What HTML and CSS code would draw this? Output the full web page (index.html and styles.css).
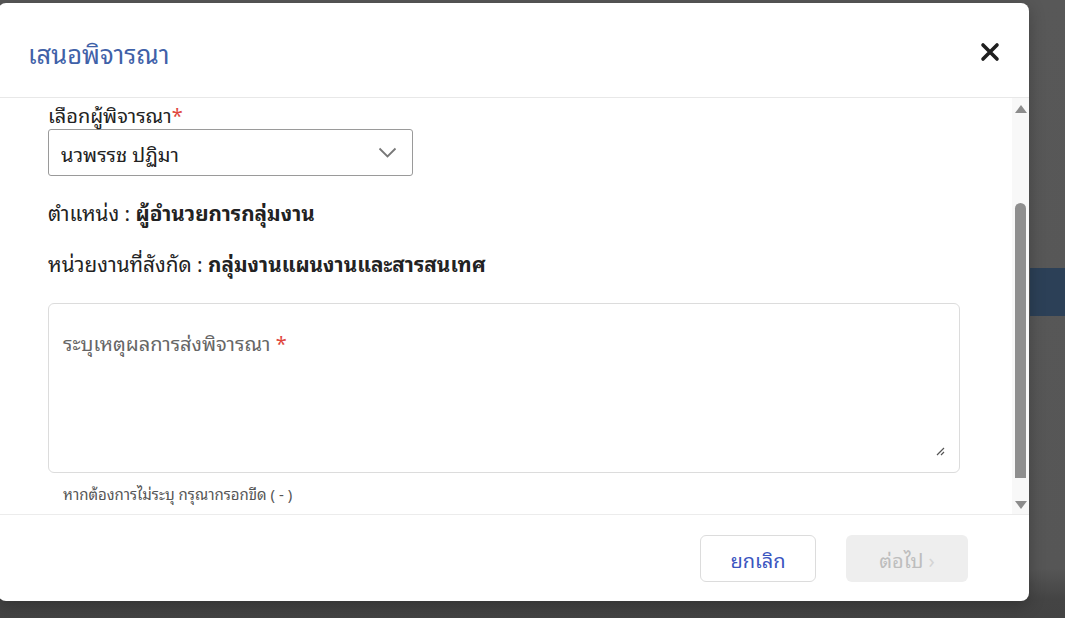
FILE: index.html
```html
<!DOCTYPE html>
<html>
<head>
    <title>เสนอพิจารณา</title>
    <link rel="stylesheet" href="styles.css">
</head>
<body>
    <div class="page-band"></div>

    <div class="modal">
        <div class="modal-header">
            <h1 class="modal-title">เสนอพิจารณา</h1>
            <button class="close-button" aria-label="ปิด">
                <svg width="20" height="20" viewBox="0 0 20 20">
                    <path d="M3 3 L17 17 M17 3 L3 17" stroke="#1f1f1f" stroke-width="3.6" stroke-linecap="round"/>
                </svg>
            </button>
        </div>

        <div class="modal-body">
            <div class="body-content">
                <div class="field-label">เลือกผู้พิจารณา<span class="required">*</span></div>
                <div class="select-box">
                    <span>นวพรรช ปฏิมา</span>
                    <svg class="chevron" width="19" height="11" viewBox="0 0 19 11">
                        <path d="M1.5 1.5 L9.5 9.5 L17.5 1.5" fill="none" stroke="#777" stroke-width="1.8"/>
                    </svg>
                </div>

                <div class="info-line">ตำแหน่ง : <b>ผู้อำนวยการกลุ่มงาน</b></div>
                <div class="info-line second">หน่วยงานที่สังกัด : <b>กลุ่มงานแผนงานและสารสนเทศ</b></div>

                <div class="textarea-box">
                    <div class="textarea-label">ระบุเหตุผลการส่งพิจารณา <span class="required">*</span></div>
                    <svg class="resize-grip" width="10" height="10" viewBox="0 0 10 10">
                        <path d="M9 2 L2 9 M9 6 L6 9" stroke="#555" stroke-width="1.2"/>
                    </svg>
                </div>
                <div class="helper-text">หากต้องการไม่ระบุ กรุณากรอกขีด ( - )</div>
            </div>

            <div class="scrollbar">
                <div class="arrow up"></div>
                <div class="thumb"></div>
                <div class="arrow down"></div>
            </div>
        </div>

        <div class="modal-footer">
            <button class="btn btn-cancel">ยกเลิก</button>
            <button class="btn btn-next" disabled>ต่อไป <span class="next-arrow">›</span></button>
        </div>
    </div>
</body>
</html>
```

FILE: styles.css
```css
body {
    margin: 0;
    width: 1065px;
    height: 618px;
    overflow: hidden;
    background: linear-gradient(to bottom, #585858 0%, #565656 92%, #444 97%, #434343 100%);
    font-family: "Noto Sans Thai Looped", "Noto Sans Thai", "Noto Sans", sans-serif;
    color: #222;
    position: relative;
}
.page-band {
    position: absolute;
    left: 1030px;
    top: 268px;
    width: 35px;
    height: 48px;
    background-color: #2c4057;
}
.modal {
    position: absolute;
    left: -2px;
    top: 3px;
    width: 1031px;
    height: 598px;
    background: white;
    border-radius: 8px;
    display: flex;
    flex-direction: column;
    overflow: hidden;
    box-shadow: 0 4px 16px rgba(0,0,0,0.25);
}
.modal-header {
    height: 95px;
    box-sizing: border-box;
    padding: 4px 28px 0 30px;
    display: flex;
    align-items: center;
    justify-content: space-between;
    border-bottom: 1px solid #e8e8e8;
}
.modal-title {
    margin: 0;
    font-size: 25.5px;
    font-weight: 400;
    color: #3f61a8;
}
.close-button {
    background: none;
    border: none;
    padding: 0;
    width: 22px;
    height: 22px;
    display: flex;
    align-items: center;
    justify-content: center;
    cursor: pointer;
}
.modal-body {
    height: 416px;
    display: flex;
    border-bottom: 1px solid #ececec;
}
.body-content {
    flex: 1;
    padding: 4px 52px 0 50px;
}
.field-label {
    font-size: 20px;
    line-height: 24px;
}
.required {
    color: #e0473e;
}
.select-box {
    margin-top: 3px;
    width: 365px;
    height: 47px;
    box-sizing: border-box;
    border: 1px solid #9a9a9a;
    border-radius: 3px;
    padding: 0 15px 0 12px;
    display: flex;
    align-items: center;
    justify-content: space-between;
    font-size: 20px;
}
.info-line {
    margin-top: 24px;
    font-size: 20.7px;
    line-height: 24px;
}
.info-line.second {
    margin-top: 27px;
}
.textarea-box {
    margin-top: 28px;
    height: 170px;
    box-sizing: border-box;
    border: 1px solid #dcdcdc;
    border-radius: 6px;
    padding: 26px 14px 0 14px;
    position: relative;
}
.textarea-label {
    font-size: 20px;
    line-height: 24px;
    color: #666;
}
.resize-grip {
    position: absolute;
    right: 14px;
    bottom: 16px;
}
.helper-text {
    margin-top: 11px;
    padding-left: 15px;
    font-size: 15px;
    line-height: 18px;
    color: #555;
}
.scrollbar {
    width: 17px;
    background-color: #f8f8f8;
    display: flex;
    flex-direction: column;
    align-items: center;
}
.arrow {
    width: 0;
    height: 0;
    border-left: 6px solid transparent;
    border-right: 6px solid transparent;
}
.arrow.up {
    margin-top: 7px;
    border-bottom: 8px solid #8c8c8c;
}
.arrow.down {
    margin-top: 23px;
    border-top: 8px solid #8c8c8c;
}
.thumb {
    margin-top: 90px;
    width: 11px;
    height: 275px;
    background-color: #8f8f8f;
    border-radius: 6px 6px 0 0;
}
.modal-footer {
    flex: 1;
    display: flex;
    justify-content: flex-end;
    align-items: flex-start;
    gap: 30px;
    padding: 20px 61px 0 0;
}
.btn {
    height: 47px;
    border-radius: 6px;
    font-family: "Noto Sans Thai Looped", "Noto Sans Thai", "Noto Sans", sans-serif;
    font-size: 20px;
    cursor: pointer;
}
.btn-cancel {
    width: 116px;
    background: white;
    border: 1px solid #dcdcdc;
    color: #3a55c0;
}
.btn-next {
    width: 122px;
    background-color: #eeeeee;
    border: none;
    color: #bdbdbd;
}
.next-arrow {
    font-size: 20px;
    color: #d4d4d4;
}
```
